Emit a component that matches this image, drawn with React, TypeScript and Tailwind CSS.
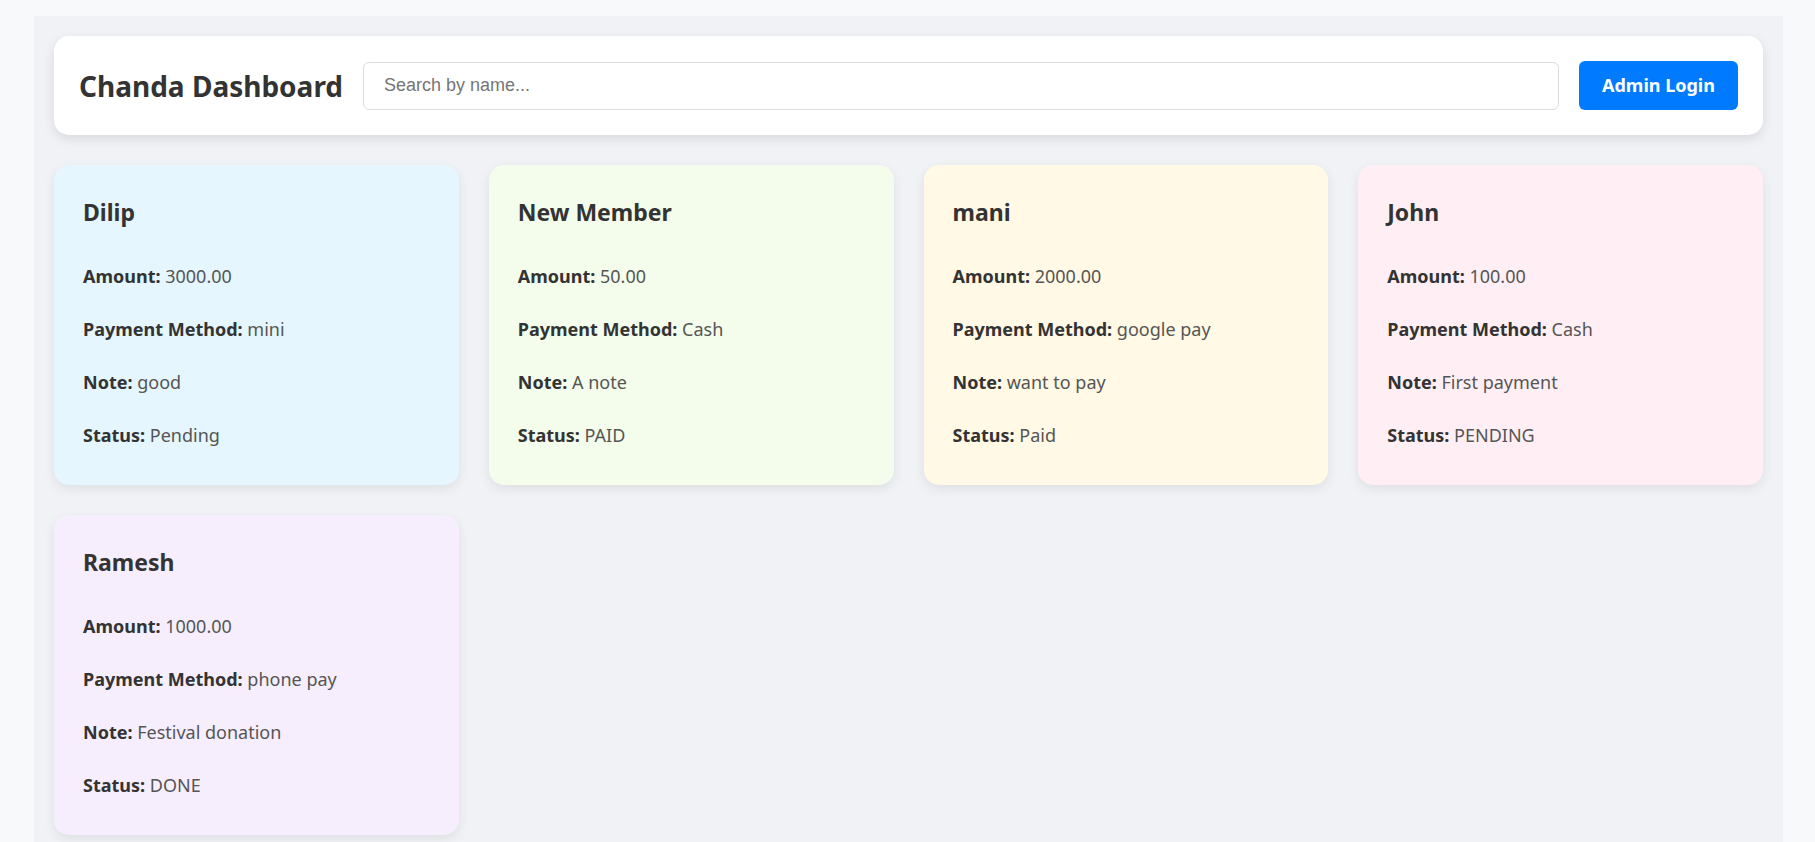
const members = [
  { name: "Dilip", amount: "3000.00", method: "mini", note: "good", status: "Pending", bg: "bg-[#e5f6fe]" },
  { name: "New Member", amount: "50.00", method: "Cash", note: "A note", status: "PAID", bg: "bg-[#f4fdeb]" },
  { name: "mani", amount: "2000.00", method: "google pay", note: "want to pay", status: "Paid", bg: "bg-[#fff9e6]" },
  { name: "John", amount: "100.00", method: "Cash", note: "First payment", status: "PENDING", bg: "bg-[#ffeff4]" },
  { name: "Ramesh", amount: "1000.00", method: "phone pay", note: "Festival donation", status: "DONE", bg: "bg-[#f7eefd]" },
];

function Field({ label, value }: { label: string; value: string }) {
  return (
    <p className="text-[18px] leading-[32px] text-[#555]">
      <strong className="font-bold text-[#333]">{label}:</strong> {value}
    </p>
  );
}

export default function App() {
  return (
    <div className="min-h-screen bg-[#f8f9fa] pt-4 pl-[34px] pr-[32px] font-['Noto_Sans',sans-serif]">
      <div className="min-h-[826px] bg-[#f0f2f5] p-5">
        <header className="flex items-center gap-5 rounded-[15px] bg-white px-[25px] py-[25px] shadow-[0_4px_12px_rgba(0,0,0,0.1)]">
          <h1 className="shrink-0 text-[28px] leading-[36px] font-bold text-[#333]">Chanda Dashboard</h1>
          <input
            type="text"
            placeholder="Search by name..."
            className="h-[48px] flex-1 rounded-[6px] border border-[#ddd] bg-white px-5 font-['Liberation_Sans',sans-serif] text-[18px] text-[#333] outline-none placeholder:text-[#757575]"
          />
          <button className="h-[49px] w-[159px] shrink-0 rounded-[6px] bg-[#007bff] text-[18px] font-bold text-white">
            Admin Login
          </button>
        </header>

        <div className="mt-[30px] grid grid-cols-4 gap-[30px]">
          {members.map((m) => (
            <div
              key={m.name}
              className={`${m.bg} flex flex-col rounded-[15px] px-[29px] pt-[31px] pb-[34px] shadow-[0_4px_12px_rgba(0,0,0,0.08)]`}
            >
              <h3 className="text-[23px] leading-[33px] font-bold text-[#333]">{m.name}</h3>
              <div className="mt-[31px] flex flex-col gap-[21px]">
                <Field label="Amount" value={m.amount} />
                <Field label="Payment Method" value={m.method} />
                <Field label="Note" value={m.note} />
                <Field label="Status" value={m.status} />
              </div>
            </div>
          ))}
        </div>
      </div>
    </div>
  );
}
